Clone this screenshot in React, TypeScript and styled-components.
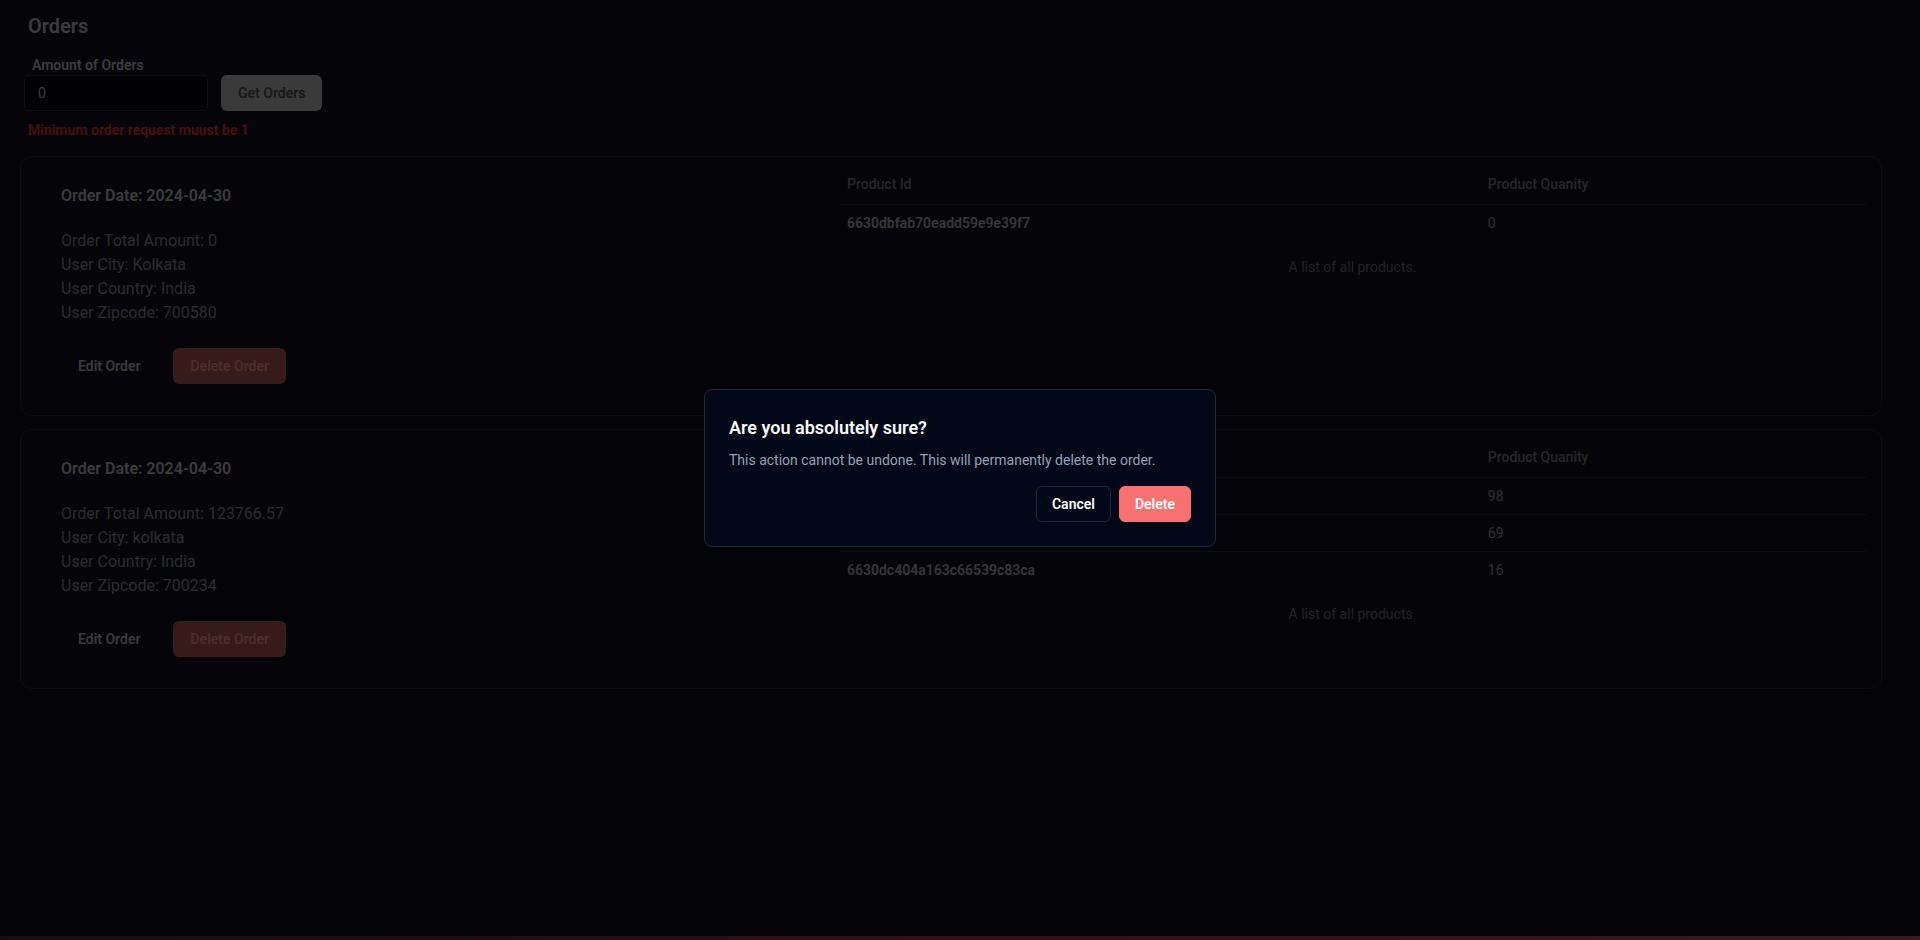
import React, { useState } from 'react';
import styled, { createGlobalStyle } from 'styled-components';

const GlobalStyle = createGlobalStyle`
  * {
    box-sizing: border-box;
  }
  body {
    margin: 0;
    background: #121220;
    font-family: Roboto, "Liberation Sans", Arial, sans-serif;
  }
`;

const Page = styled.div`
  min-height: 100vh;
  display: flex;
  flex-direction: column;
  padding: 12px 38px 0 20px;
`;

const Title = styled.h1`
  margin: 0 0 0 8px;
  font-size: 20px;
  line-height: 28px;
  font-weight: 600;
  color: #d2d2d2;
`;

const Form = styled.div`
  margin: 15px 0 0 4px;
  display: flex;
  flex-direction: column;
`;

const Label = styled.label`
  padding-left: 8px;
  font-size: 14px;
  line-height: 20px;
  font-weight: 600;
  color: #d2d2d2;
`;

const Controls = styled.div`
  display: flex;
  gap: 13px;
`;

const AmountInput = styled.input`
  width: 184px;
  height: 36px;
  padding: 0 13px;
  border: 1px solid #3a3a48;
  border-radius: 6px;
  background: #0a0a12;
  color: #d2d2d2;
  font-family: inherit;
  font-size: 14px;
  outline: none;
`;

const Button = styled.button<{ $variant: 'light' | 'ghost' | 'danger' }>`
  height: 36px;
  padding: 0 17px;
  border: none;
  border-radius: 6px;
  font-family: inherit;
  font-size: 14px;
  font-weight: 600;
  cursor: pointer;
  background: ${(p) => (p.$variant === 'light' ? '#cfcfcf' : p.$variant === 'danger' ? '#c45d5d' : 'transparent')};
  color: ${(p) => (p.$variant === 'light' ? '#5a5a5a' : p.$variant === 'danger' ? '#ffaaaa' : '#cccccc')};
`;

const ErrorText = styled.p`
  margin: 9px 0 0 8px;
  font-size: 14px;
  line-height: 20px;
  font-weight: 600;
  color: #ff3a3a;
`;

const CardList = styled.div`
  margin-top: 16px;
  display: flex;
  flex-direction: column;
  gap: 13px;
`;

const Card = styled.div`
  display: flex;
  border: 1px solid #34343f;
  border-radius: 12px;
  padding-right: 15px;
`;

const Info = styled.div`
  width: 818px;
  flex-shrink: 0;
  padding: 27px 40px 31px 40px;
`;

const OrderDate = styled.h3`
  margin: 0 0 21px;
  font-size: 16px;
  line-height: 24px;
  font-weight: 600;
  color: #d2d2d2;
`;

const InfoLine = styled.p`
  margin: 0;
  font-size: 16px;
  line-height: 24px;
  color: #9c9c9c;
`;

const Actions = styled.div`
  margin-top: 23px;
  display: flex;
  gap: 16px;
`;

const Products = styled.div`
  flex: 1;
  padding-top: 7px;
`;

const Table = styled.table`
  width: 100%;
  border-collapse: collapse;
  font-size: 14px;
  line-height: 20px;
`;

const HeadRow = styled.tr`
  border-bottom: 1px solid #34343f;
`;

const Th = styled.th<{ $first?: boolean }>`
  height: 40px;
  padding: 0 8px;
  text-align: left;
  font-weight: 500;
  color: #8a8a8a;
  width: ${(p) => (p.$first ? '62.4%' : 'auto')};
`;

const Row = styled.tr`
  border-bottom: 1px solid #34343f;
  &:last-child {
    border-bottom: none;
  }
`;

const Td = styled.td<{ $strong?: boolean }>`
  padding: 8px;
  font-weight: ${(p) => (p.$strong ? 600 : 400)};
  color: ${(p) => (p.$strong ? '#c0c0c0' : '#a8a8a8')};
`;

const Caption = styled.caption`
  caption-side: bottom;
  margin-top: 16px;
  color: #7a7a7a;
`;

const BottomStrip = styled.div`
  margin: auto -38px 0 -20px;
  height: 4px;
  background: linear-gradient(90deg, #4a3448 0%, #6a3448 25%, #b04052 50%, #b64a58 75%, #c06070 100%);
`;

const Overlay = styled.div`
  position: fixed;
  inset: 0;
  background: rgba(0, 0, 0, 0.72);
  display: flex;
  align-items: center;
  justify-content: center;
  padding-bottom: 5px;
`;

const Dialog = styled.div`
  width: 512px;
  padding: 24px;
  background: #020817;
  border: 1px solid #1e293b;
  border-radius: 8px;
  display: flex;
  flex-direction: column;
  gap: 8px;
`;

const DialogTitle = styled.h2`
  margin: 0;
  font-size: 18px;
  line-height: 28px;
  font-weight: 600;
  color: #f8fafc;
`;

const DialogText = styled.p`
  margin: 0;
  font-size: 14px;
  line-height: 20px;
  color: #94a3b8;
`;

const DialogFooter = styled.div`
  margin-top: 8px;
  display: flex;
  justify-content: flex-end;
  gap: 8px;
`;

const DialogButton = styled.button<{ $danger?: boolean }>`
  height: 36px;
  padding: 0 15px;
  border-radius: 6px;
  border: 1px solid ${(p) => (p.$danger ? '#f87171' : '#1e293b')};
  background: ${(p) => (p.$danger ? '#f87171' : '#020817')};
  color: #f8fafc;
  font-family: inherit;
  font-size: 14px;
  font-weight: 600;
  cursor: pointer;
`;

type Order = {
  date: string;
  total: string;
  city: string;
  country: string;
  zipcode: string;
  products: { id: string; quantity: number }[];
};

const orders: Order[] = [
  {
    date: '2024-04-30',
    total: '0',
    city: 'Kolkata',
    country: 'India',
    zipcode: '700580',
    products: [{ id: '6630dbfab70eadd59e9e39f7', quantity: 0 }],
  },
  {
    date: '2024-04-30',
    total: '123766.57',
    city: 'kolkata',
    country: 'India',
    zipcode: '700234',
    products: [
      { id: '6630dbfab70eadd59e9e39f7', quantity: 98 },
      { id: '6630dc1a4a163c66539c83c6', quantity: 69 },
      { id: '6630dc404a163c66539c83ca', quantity: 16 },
    ],
  },
];

const App: React.FC = () => {
  const [amount, setAmount] = useState('0');
  const [confirmOpen, setConfirmOpen] = useState(true);

  return (
    <>
      <GlobalStyle />
      <Page>
        <Title>Orders</Title>
        <Form>
          <Label htmlFor="amount">Amount of Orders</Label>
          <Controls>
            <AmountInput id="amount" value={amount} onChange={(e) => setAmount(e.target.value)} />
            <Button $variant="light">Get Orders</Button>
          </Controls>
        </Form>
        <ErrorText>Minimum order request muust be 1</ErrorText>

        <CardList>
          {orders.map((order, i) => (
            <Card key={i}>
              <Info>
                <OrderDate>Order Date: {order.date}</OrderDate>
                <InfoLine>Order Total Amount: {order.total}</InfoLine>
                <InfoLine>User City: {order.city}</InfoLine>
                <InfoLine>User Country: {order.country}</InfoLine>
                <InfoLine>User Zipcode: {order.zipcode}</InfoLine>
                <Actions>
                  <Button $variant="ghost">Edit Order</Button>
                  <Button $variant="danger" onClick={() => setConfirmOpen(true)}>
                    Delete Order
                  </Button>
                </Actions>
              </Info>
              <Products>
                <Table>
                  <Caption>A list of all products.</Caption>
                  <thead>
                    <HeadRow>
                      <Th $first>Product Id</Th>
                      <Th>Product Quanity</Th>
                    </HeadRow>
                  </thead>
                  <tbody>
                    {order.products.map((p) => (
                      <Row key={p.id}>
                        <Td $strong>{p.id}</Td>
                        <Td>{p.quantity}</Td>
                      </Row>
                    ))}
                  </tbody>
                </Table>
              </Products>
            </Card>
          ))}
        </CardList>
        <BottomStrip />
      </Page>

      {confirmOpen && (
        <Overlay>
          <Dialog role="alertdialog">
            <DialogTitle>Are you absolutely sure?</DialogTitle>
            <DialogText>This action cannot be undone. This will permanently delete the order.</DialogText>
            <DialogFooter>
              <DialogButton onClick={() => setConfirmOpen(false)}>Cancel</DialogButton>
              <DialogButton $danger onClick={() => setConfirmOpen(false)}>
                Delete
              </DialogButton>
            </DialogFooter>
          </Dialog>
        </Overlay>
      )}
    </>
  );
};

export default App;
